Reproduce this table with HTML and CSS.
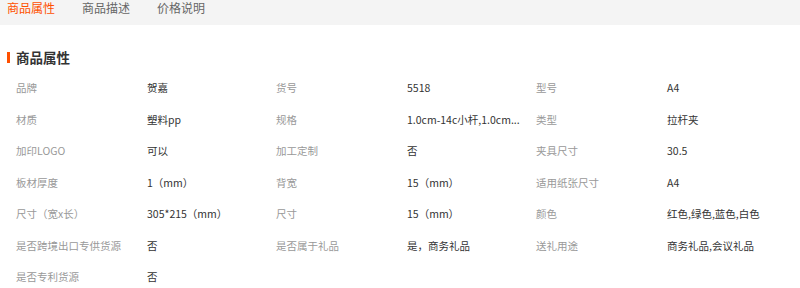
FILE: index.html
```html
<!DOCTYPE html>
<html lang="zh-CN">
<head>
<meta charset="utf-8">
<title>商品属性</title>
<link rel="stylesheet" href="styles.css">
</head>
<body>
<div class="tabs">
  <span class="tab active">商品属性</span>
  <span class="tab">商品描述</span>
  <span class="tab">价格说明</span>
</div>
<h2 class="section-title">商品属性</h2>
<div class="attrs">
  <span class="lbl">品牌</span><span class="val">贺嘉</span>
  <span class="lbl">货号</span><span class="val">5518</span>
  <span class="lbl">型号</span><span class="val">A4</span>

  <span class="lbl">材质</span><span class="val">塑料pp</span>
  <span class="lbl">规格</span><span class="val">1.0cm-14c小杆,1.0cm...</span>
  <span class="lbl">类型</span><span class="val">拉杆夹</span>

  <span class="lbl">加印LOGO</span><span class="val">可以</span>
  <span class="lbl">加工定制</span><span class="val">否</span>
  <span class="lbl">夹具尺寸</span><span class="val">30.5</span>

  <span class="lbl">板材厚度</span><span class="val">1（mm）</span>
  <span class="lbl">背宽</span><span class="val">15（mm）</span>
  <span class="lbl">适用纸张尺寸</span><span class="val">A4</span>

  <span class="lbl">尺寸（宽x长）</span><span class="val">305*215（mm）</span>
  <span class="lbl">尺寸</span><span class="val">15（mm）</span>
  <span class="lbl">颜色</span><span class="val">红色,绿色,蓝色,白色</span>

  <span class="lbl">是否跨境出口专供货源</span><span class="val">否</span>
  <span class="lbl">是否属于礼品</span><span class="val">是，商务礼品</span>
  <span class="lbl">送礼用途</span><span class="val">商务礼品,会议礼品</span>

  <span class="lbl">是否专利货源</span><span class="val">否</span>
</div>
</body>
</html>
```
FILE: styles.css
```css
html, body {
  margin: 0;
  padding: 0;
  background: #fff;
}
body {
  font-family: "Noto Sans CJK SC", "Noto Sans", sans-serif;
  color: #333;
  width: 800px;
  height: 288px;
  overflow: hidden;
}
.tabs {
  display: flex;
  background: #f4f4f4;
  height: 25px;
  padding: 1px 0 0 7px;
  gap: 27px;
  box-sizing: border-box;
}
.tab {
  font-size: 12px;
  line-height: 14px;
  color: #666;
}
.tab.active {
  color: #ff5000;
}
.section-title {
  display: flex;
  align-items: center;
  gap: 6px;
  margin: 21px 0 4px;
  padding-left: 7px;
  height: 22px;
  font-size: 13.5px;
  font-weight: bold;
  color: #333;
}
.section-title::before {
  content: "";
  width: 3px;
  height: 11px;
  background: #ff5000;
}
.attrs {
  display: grid;
  grid-template-columns: 131px 129px 131px 129px 131px 129px;
  grid-auto-rows: 31.5px;
  align-items: center;
  padding-left: 16px;
  font-size: 10.5px;
}
.lbl {
  color: #999;
  white-space: nowrap;
}
.val {
  color: #333;
  white-space: nowrap;
}
```
